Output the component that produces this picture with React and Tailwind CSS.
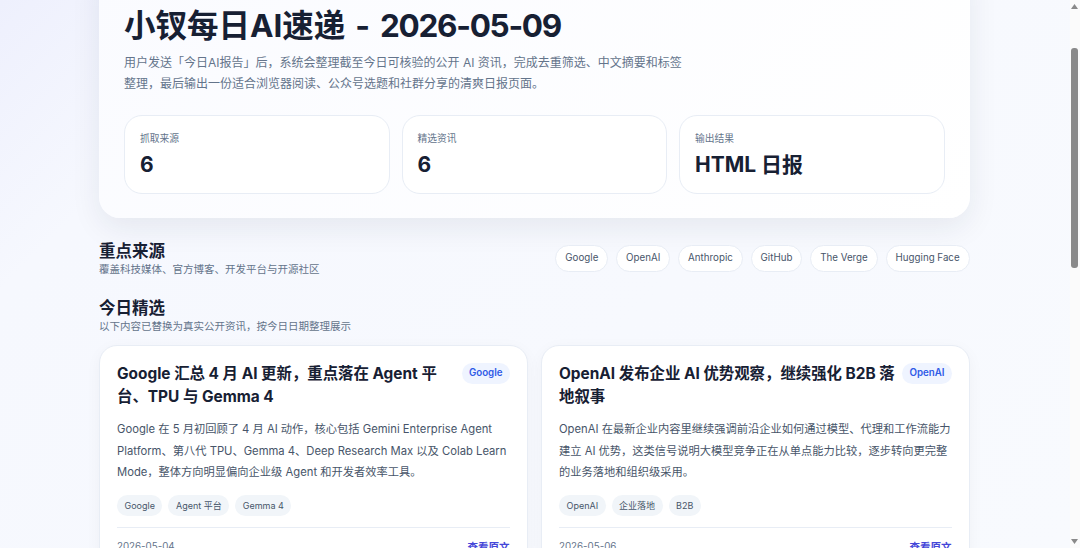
import React from "react";

const stats = [
  { label: "抓取来源", value: "6" },
  { label: "精选资讯", value: "6" },
  { label: "输出结果", value: "HTML 日报" },
];

const sources = ["Google", "OpenAI", "Anthropic", "GitHub", "The Verge", "Hugging Face"];

const news = [
  {
    title: "Google 汇总 4 月 AI 更新，重点落在 Agent 平台、TPU 与 Gemma 4",
    source: "Google",
    text: "Google 在 5 月初回顾了 4 月 AI 动作，核心包括 Gemini Enterprise Agent Platform、第八代 TPU、Gemma 4、Deep Research Max 以及 Colab Learn Mode，整体方向明显偏向企业级 Agent 和开发者效率工具。",
    tags: ["Google", "Agent 平台", "Gemma 4"],
    date: "2026-05-04",
  },
  {
    title: "OpenAI 发布企业 AI 优势观察，继续强化 B2B 落地叙事",
    source: "OpenAI",
    text: "OpenAI 在最新企业内容里继续强调前沿企业如何通过模型、代理和工作流能力建立 AI 优势，这类信号说明大模型竞争正在从单点能力比较，逐步转向更完整的业务落地和组织级采用。",
    tags: ["OpenAI", "企业落地", "B2B"],
    date: "2026-05-06",
  },
];

const App = () => {
  return (
    <div className="flex h-[548px] w-[1080px] overflow-hidden font-['Inter','Noto_Sans_CJK_SC',sans-serif] text-[#172033]">
      <main className="h-full flex-1 overflow-hidden bg-[linear-gradient(135deg,#eef0fd_0%,#f6f8fe_18%,#f8fafe_100%)] pr-[1px]">
        <div className="mx-auto -mt-[39px] w-[870.5px]">
          <section className="rounded-[21px] bg-[linear-gradient(135deg,#fafbff,#ffffff)] px-[25px] pt-[40px] pb-[24.5px] shadow-[0_10px_30px_rgba(30,41,59,0.08)]">
            <h1 className="text-[31.5px] leading-[50px] font-bold [word-spacing:2.5px]">
              小钗每日AI速递 - <span className="tracking-[-1.3px]">2026-05-09</span>
            </h1>
            <p className="mt-[1px] w-[565px] text-[12px] leading-[21.4px] text-[#64748b]">
              用户发送「今日AI报告」后，系统会整理截至今日可核验的公开 AI 资讯，完成去重筛选、中文摘要和标签整理，最后输出一份适合浏览器阅读、公众号选题和社群分享的清爽日报页面。
            </p>
            <div className="mt-[20.4px] grid grid-cols-3 gap-[12px]">
              {stats.map((s) => (
                <div key={s.label} className="h-[78.5px] rounded-[18px] border border-[#e8edf5] bg-white px-[15px] pt-[15px]">
                  <div className="text-[9.75px] leading-[16px] text-[#64748b]">{s.label}</div>
                  <div className="mt-[2px] text-[21px] leading-[32px] font-bold">{s.value}</div>
                </div>
              ))}
            </div>
          </section>

          <section className="mt-[22px] flex items-center justify-between">
            <div>
              <h2 className="text-[16.5px] leading-[22px] font-bold">重点来源</h2>
              <p className="mt-[1px] text-[10.5px] leading-[14px] text-[#64748b]">覆盖科技媒体、官方博客、开发平台与开源社区</p>
            </div>
            <div className="flex gap-[8px]">
              {sources.map((s) => (
                <span key={s} className="flex h-[27px] items-center rounded-full border border-[#e8edf5] bg-white px-[8.9px] text-[9.75px] text-[#475569]">
                  {s}
                </span>
              ))}
            </div>
          </section>

          <section className="mt-[20px]">
            <h2 className="text-[16.5px] leading-[22px] font-bold">今日精选</h2>
            <p className="mt-[1px] text-[10.5px] leading-[14px] text-[#64748b]">以下内容已替换为真实公开资讯，按今日日期整理展示</p>
          </section>

          <section className="mt-[11px] grid grid-cols-2 gap-[13.5px]">
            {news.map((n) => (
              <article key={n.date} className="rounded-[18px] border border-[#e8edf5] bg-white px-[17px] pt-[17px] pb-[12px] shadow-[0_4px_16px_rgba(30,41,59,0.04)]">
                <div className="flex items-start justify-between gap-[6px]">
                  <h3 className="flex-1 text-[15.4px] leading-[22.5px] font-bold">{n.title}</h3>
                  <span className="flex h-[21px] shrink-0 items-center rounded-full bg-[#eff4ff] px-[7px] text-[9.75px] font-semibold text-[#2f5be7]">
                    {n.source}
                  </span>
                </div>
                <p className="mt-[11px] text-[11.25px] leading-[21.4px] text-[#475569]">{n.text}</p>
                <div className="mt-[12px] flex gap-[6px]">
                  {n.tags.map((t) => (
                    <span key={t} className="flex h-[20.5px] items-center rounded-full bg-[#f1f5f9] px-[7.5px] text-[9px] text-[#475569]">
                      {t}
                    </span>
                  ))}
                </div>
                <div className="mt-[11px] flex items-center justify-between border-t border-[#e8edf5] pt-[12px]">
                  <span className="text-[9.75px] text-[#64748b]">{n.date}</span>
                  <span className="text-[10.5px] font-semibold text-[#4547d8]">查看原文</span>
                </div>
              </article>
            ))}
          </section>
        </div>
      </main>

      <div className="flex h-full w-[10.5px] flex-col items-center bg-[#fbfbfb]">
        <svg className="mt-[4px] h-[5px] w-[7px]" viewBox="0 0 7 5"><path d="M3.5 0 7 5H0z" fill="#8a8a8a" /></svg>
        <div className="mt-[39px] h-[220px] w-[7px] rounded-[3px] bg-[#8a8a8a]" />
        <svg className="mt-auto mb-[4px] h-[5px] w-[7px]" viewBox="0 0 7 5"><path d="M0 0h7L3.5 5z" fill="#8a8a8a" /></svg>
      </div>
    </div>
  );
};

export default App;
